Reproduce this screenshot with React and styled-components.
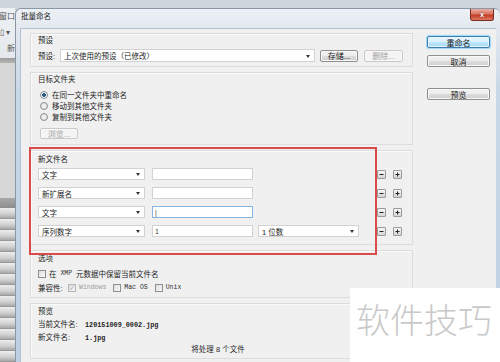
import styled, { createGlobalStyle } from "styled-components";

const GlobalStyle = createGlobalStyle`
  html, body {
    margin: 0;
    padding: 0;
  }
  body {
    width: 500px;
    height: 362px;
    overflow: hidden;
    background: #d3d9e0;
    font-family: "Liberation Sans", "Noto Sans CJK SC", sans-serif;
    color: #1e1e1e;
  }
`;

const Screen = styled.div`
  position: relative;
  width: 500px;
  height: 362px;
  display: flex;
  overflow: hidden;
  background: linear-gradient(180deg, #cfd5dc 0%, #d9dee4 100%);
`;

/* the app window peeking out behind the dialog */
const BackApp = styled.div`
  width: 15px;
  display: flex;
  flex-direction: column;
  overflow: hidden;
`;

const BackTop = styled.div`
  height: 8px;
`;

const BackToolbar = styled.div`
  height: 50px;
  background: linear-gradient(180deg, #eef1f4 0%, #e4e8ec 100%);
  display: flex;
  flex-direction: column;
  font-size: 8px;
  color: #555;
  padding-top: 4px;
  box-sizing: border-box;
  gap: 6px;
  white-space: nowrap;
`;

const BackText = styled.span`
  margin-left: ${(p) => p.$x}px;
  line-height: 10px;
`;

const BackBar = styled.div`
  height: 5px;
  background: linear-gradient(180deg, #9b9b9b, #b5b5b5);
`;

const BackPanel = styled.div`
  height: 135px;
  background: #d7d7d7;
`;

const BackStrip = styled.div`
  height: 10px;
  background: linear-gradient(180deg, #a9a9a9, #8d8d8d);
`;

const BackList = styled.div`
  flex: 1;
  background: repeating-linear-gradient(
    180deg,
    #eeeeee 0px,
    #cfcfcf 6px,
    #a9a9a9 10px,
    #888888 11px
  );
`;

const Dialog = styled.div`
  flex: 1;
  margin-top: 8px;
  display: flex;
  flex-direction: column;
  border-radius: 6px 6px 0 0;
  border-top: 1px solid #8b97a5;
  border-left: 1px solid #8b97a5;
  padding: 0 4px 0 4px;
  background: linear-gradient(180deg, #edf1f5 0px, #e2e8ef 20px, #c9d8e7 80px, #bdd0e4 100%);
`;

const TitleBar = styled.div`
  height: 19px;
  display: flex;
  align-items: flex-start;
`;

const Title = styled.span`
  font-size: 7.5px;
  line-height: 10px;
  margin: 3px 0 0 1px;
  color: #1b1b1b;
`;

const CloseBtn = styled.div`
  margin-left: auto;
  margin-right: 2px;
  width: 24px;
  height: 12px;
  box-sizing: border-box;
  border: 1px solid #7d2b22;
  border-top: none;
  border-radius: 0 0 3px 3px;
  background: linear-gradient(180deg, #eab0a4 0%, #d97562 45%, #c43c26 55%, #dc7a63 100%);
  color: #fff;
  font-size: 7.5px;
  font-weight: bold;
  display: flex;
  align-items: center;
  justify-content: center;
  text-shadow: 0 0 2px #6b1a10;
`;

const Body = styled.div`
  flex: 1;
  display: flex;
  gap: 14px;
  padding: 4px 6px 0 9px;
  background: #f0f0f0;
  border-top: 1px solid #b3c1d0;
  border-left: 1px solid #b3c1d0;
`;

const MainCol = styled.div`
  width: 383px;
  display: flex;
  flex-direction: column;
  gap: 5px;
`;

const SideCol = styled.div`
  width: 63px;
  display: flex;
  flex-direction: column;
  padding-top: 3px;
`;

const Group = styled.div`
  border: 1px solid #dcdcdc;
  box-shadow: inset 1px 1px 0 #fafafa;
  padding: ${(p) => p.$pt}px 10px ${(p) => p.$pb}px 7px;
  display: flex;
  flex-direction: column;
`;

const GroupLabel = styled.div`
  font-size: 7.5px;
  line-height: 10px;
  color: #222;
`;

const Row = styled.div`
  display: flex;
  align-items: center;
  height: ${(p) => p.$h || 12}px;
  margin-top: ${(p) => p.$mt || 0}px;
  font-size: 7.5px;
  white-space: nowrap;
`;

const FieldLabel = styled.span`
  width: ${(p) => p.$w}px;
  flex: none;
  font-size: 7.5px;
`;

const Select = styled.div`
  position: relative;
  width: ${(p) => p.$w}px;
  height: ${(p) => p.$h || 12}px;
  margin-left: ${(p) => p.$ml || 0}px;
  flex: none;
  box-sizing: border-box;
  background: #fff;
  border: 1px solid #d2d2d2;
  font-size: 7.5px;
  display: flex;
  align-items: center;
  padding-left: 3px;
  color: #222;

  &::after {
    content: "";
    position: absolute;
    right: 4px;
    top: 50%;
    margin-top: -1px;
    border-left: 2.5px solid transparent;
    border-right: 2.5px solid transparent;
    border-top: 3px solid #333;
  }
`;

const Input = styled.div`
  width: ${(p) => p.$w}px;
  height: 12px;
  margin-left: ${(p) => p.$ml || 0}px;
  flex: none;
  box-sizing: border-box;
  background: #fff;
  border: 1px solid ${(p) => (p.$focus ? "#86b5e2" : "#d2d2d2")};
  font-size: 7px;
  display: flex;
  align-items: center;
  padding-left: 2px;
  color: #444;
`;

const Button = styled.div`
  width: ${(p) => p.$w || 63}px;
  height: ${(p) => p.$h || 12}px;
  margin-left: ${(p) => p.$ml || 0}px;
  margin-top: ${(p) => p.$mt || 0}px;
  flex: none;
  box-sizing: border-box;
  border-radius: 2px;
  border: 1px solid ${(p) => (p.$primary ? "#3c7fb1" : p.$disabled ? "#c9c9c9" : "#8e8f8f")};
  background: ${(p) =>
    p.$primary
      ? "linear-gradient(180deg, #eaf6fd 0%, #d9f0fc 50%, #bee6fd 51%, #a7d9f5 100%)"
      : p.$disabled
      ? "#f4f4f4"
      : "linear-gradient(180deg, #f2f2f2 0%, #ebebeb 50%, #dddddd 51%, #cfcfcf 100%)"};
  box-shadow: ${(p) => (p.$primary ? "0 0 1px 1px #9fd5f5, inset 0 0 0 1px #e6f5fd" : "inset 0 0 0 1px #f8f8f8")};
  color: ${(p) => (p.$disabled ? "#a3a3a3" : "#1b1b1b")};
  font-size: 8px;
  display: flex;
  align-items: center;
  justify-content: center;
  white-space: nowrap;
`;

const Radio = styled.span`
  width: 6px;
  height: 6px;
  margin-left: 2px;
  margin-right: 4px;
  flex: none;
  border-radius: 50%;
  border: 1px solid #8e8f8f;
  background: radial-gradient(circle, ${(p) => (p.$on ? "#2c5a86 0 1.6px, #eef2f6 2px" : "#f4f4f4 0, #dcdcdc 100%")});
`;

const Check = styled.span`
  width: 6px;
  height: 6px;
  margin-left: ${(p) => p.$ml || 0}px;
  margin-right: 3px;
  flex: none;
  border: 1px solid ${(p) => (p.$disabled ? "#b5b5b5" : "#8e8f8f")};
  background: linear-gradient(135deg, #dedede, #f8f8f8);
  color: #9a9a9a;
  font-size: 6px;
  line-height: 6px;
  text-align: center;
`;

const Mono = styled.span`
  font-family: "Liberation Mono", "DejaVu Sans Mono", monospace;
  font-size: 6.5px;
  color: ${(p) => (p.$dim ? "#9a9a9a" : "#333")};
`;

const RowGroup = styled.div`
  display: flex;
  flex-direction: column;
  gap: 7px;
  margin-top: 3px;
`;

const PlusMinus = styled.div`
  margin-left: auto;
  display: flex;
  gap: 7px;
`;

const SmallBtn = styled.div`
  width: 9px;
  height: 9px;
  box-sizing: border-box;
  border: 1px solid #9a9a9a;
  border-radius: 1px;
  background: linear-gradient(180deg, #f7f7f7, #d4d4d4);
  display: flex;
  align-items: center;
  justify-content: center;
`;

const InfoGrid = styled.div`
  display: grid;
  grid-template-columns: 47px auto;
  row-gap: 3px;
  margin-top: 3px;
  font-size: 7.5px;
  line-height: 10px;
`;

const FileName = styled.span`
  font-family: "Liberation Mono", "DejaVu Sans Mono", monospace;
  font-weight: bold;
  font-size: 6.8px;
`;

const Summary = styled.div`
  margin-top: 2px;
  font-size: 7.5px;
  line-height: 10px;
  text-align: center;
  padding-right: 4px;
`;

const Highlight = styled.div`
  position: absolute;
  left: 29px;
  top: 147px;
  width: 348px;
  height: 108px;
  box-sizing: border-box;
  border: 2px solid #d84c4c;
  pointer-events: none;
`;

const Watermark = styled.div`
  position: absolute;
  left: 350px;
  top: 288px;
  right: 0;
  bottom: 0;
  background: #fff;
  padding: 14px 0 0 6px;
  box-sizing: border-box;
  font-family: "Noto Sans CJK SC", sans-serif;
  font-weight: 300;
  font-size: 34px;
  line-height: 1;
  color: #c9c9c9;
  white-space: nowrap;
`;

const Minus = () => (
  <svg width="5" height="5" viewBox="0 0 5 5">
    <path d="M0.5 2.5H4.5" stroke="#222" strokeWidth="1" />
  </svg>
);

const Plus = () => (
  <svg width="5" height="5" viewBox="0 0 5 5">
    <path d="M0.5 2.5H4.5M2.5 0.5V4.5" stroke="#222" strokeWidth="1" />
  </svg>
);

const nameRows = [
  { kind: "文字", value: "" },
  { kind: "新扩展名", value: "" },
  { kind: "文字", value: "|", focus: true },
  { kind: "序列数字", value: "1", digits: "1 位数" },
];

const App = () => {
  return (
    <Screen>
      <GlobalStyle />
      <BackApp>
        <BackTop />
        <BackToolbar>
          <BackText $x={-1}>窗口</BackText>
          <BackText $x={0}>▯ ▾</BackText>
          <BackText $x={7}>新</BackText>
        </BackToolbar>
        <BackBar />
        <BackPanel />
        <BackStrip />
        <BackList />
      </BackApp>

      <Dialog>
        <TitleBar>
          <Title>批量命名</Title>
          <CloseBtn>x</CloseBtn>
        </TitleBar>
        <Body>
          <MainCol>
            <Group $pt={2} $pb={4}>
              <GroupLabel>预设</GroupLabel>
              <Row $h={13} $mt={3}>
                <FieldLabel $w={22}>预设:</FieldLabel>
                <Select $w={255} $h={13}>上次使用的预设（已修改）</Select>
                <Button $w={38} $h={12} $ml={5}>存储...</Button>
                <Button $w={39} $h={12} $ml={6} $disabled>删除...</Button>
              </Row>
            </Group>

            <Group $pt={2} $pb={5}>
              <GroupLabel>目标文件夹</GroupLabel>
              <Row $h={11} $mt={4}>
                <Radio $on />在同一文件夹中重命名
              </Row>
              <Row $h={11}>
                <Radio />移动到其他文件夹
              </Row>
              <Row $h={11}>
                <Radio />复制到其他文件夹
              </Row>
              <Button $w={38} $h={11} $ml={2} $mt={6} $disabled>浏览...</Button>
            </Group>

            <Group $pt={4} $pb={7}>
              <GroupLabel>新文件名</GroupLabel>
              <RowGroup>
                {nameRows.map((r, i) => (
                  <Row key={i}>
                    <Select $w={107}>{r.kind}</Select>
                    <Input $w={101} $ml={7} $focus={r.focus}>{r.value}</Input>
                    {r.digits && <Select $w={101} $ml={5}>{r.digits}</Select>}
                    <PlusMinus>
                      <SmallBtn><Minus /></SmallBtn>
                      <SmallBtn><Plus /></SmallBtn>
                    </PlusMinus>
                  </Row>
                ))}
              </RowGroup>
            </Group>

            <Group $pt={3} $pb={4}>
              <GroupLabel>选项</GroupLabel>
              <Row $h={11} $mt={4}>
                <Check />在 <Mono>&nbsp;XMP&nbsp;</Mono> 元数据中保留当前文件名
              </Row>
              <Row $h={11} $mt={3}>
                <FieldLabel $w={30}>兼容性:</FieldLabel>
                <Check $disabled>✓</Check>
                <Mono $dim>Windows</Mono>
                <Check $ml={7} />
                <Mono>Mac OS</Mono>
                <Check $ml={7} />
                <Mono>Unix</Mono>
              </Row>
            </Group>

            <Group $pt={3} $pb={3}>
              <GroupLabel>预览</GroupLabel>
              <InfoGrid>
                <span>当前文件名:</span>
                <FileName>120151009_0002.jpg</FileName>
                <span>新文件名:</span>
                <FileName>1.jpg</FileName>
              </InfoGrid>
              <Summary>将处理 8 个文件</Summary>
            </Group>
          </MainCol>

          <SideCol>
            <Button $primary>重命名</Button>
            <Button $mt={7}>取消</Button>
            <Button $mt={21}>预览</Button>
          </SideCol>
        </Body>
      </Dialog>

      <Highlight />
      <Watermark>软件技巧</Watermark>
    </Screen>
  );
};

export default App;
